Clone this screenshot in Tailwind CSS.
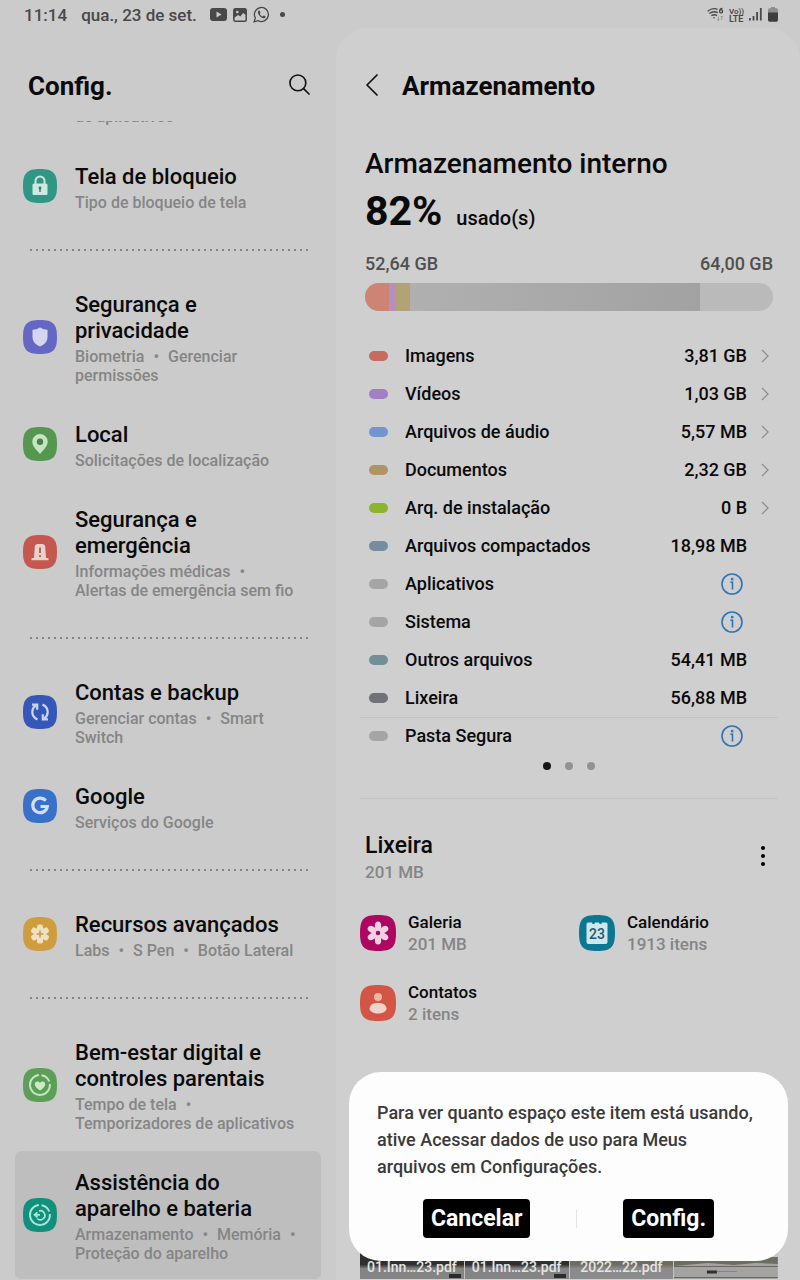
<!DOCTYPE html>
<html lang="pt-BR">
<head>
  <meta charset="UTF-8" />
  <meta name="viewport" content="width=device-width, initial-scale=1.0" />
  <title>Armazenamento</title>
  <script src="https://cdn.jsdelivr.net/npm/@tailwindcss/browser@4"></script>
</head>
<body class="bg-[#cbcbcb] font-['Roboto',sans-serif] text-[#0a0a0a]">
<div class="h-screen flex flex-col overflow-hidden">

  <!-- Status bar -->
  <header class="h-7 shrink-0 flex items-center justify-between pl-6 pr-[22px] pt-px text-[#484848]">
    <div class="flex items-center text-[17px] leading-6 font-medium">
      <span>11:14</span>
      <span class="ml-[14px]">qua., 23 de set.</span>
      <svg class="ml-[13px] w-[17px] h-[13px]" viewBox="0 0 17 13"><rect width="17" height="13" rx="3" fill="#484848"/><path d="M6.5 3.6v5.8L11.5 6.500z" fill="#cbcbcb"/></svg>
      <svg class="ml-[6px] w-[14px] h-[14px]" viewBox="0 0 14 14"><rect x=".8" y=".8" width="12.400" height="12.400" rx="1.500" fill="none" stroke="#484848" stroke-width="1.500"/><path d="M1 1h12v6L10 5 7.500 8.500 5 7 1 10z" fill="#484848"/><circle cx="4.300" cy="4" r="1.300" fill="#cbcbcb"/></svg>
      <svg class="ml-[6px] w-[17px] h-[17px]" viewBox="0 0 17 17" fill="none" stroke="#484848" stroke-width="1.300"><path d="M1.200 15.800l1.100-3.900a7 7 0 1 1 2.700 2.700z"/><path d="M5.600 4.600c-1.500 1.600-.4 4 1.300 5.700s4.200 2.900 5.500 1.300c.5-.8.200-1.200-1.400-2-.8-.3-1 .8-1.600.8S7 8.800 6.900 8s.7-.7.6-1.300C6.800 4.800 6.500 4 5.600 4.600z" fill="#484848" stroke="none"/></svg>
      <span class="ml-[10px] size-[5px] rounded-full bg-[#484848]"></span>
    </div>
    <div class="flex items-center">
      <svg class="w-[17px] h-[15px]" viewBox="0 0 17 15" fill="none" stroke="#484848" stroke-width="1.300"><path d="M.6 4.200Q5.500.4 10.500 2.300M2.300 6.600Q6.500 3.400 11 5.800M4.300 8.800Q7.200 6.800 10 8.600"/><circle cx="7" cy="10.800" r=".8" fill="#484848" stroke="none"/><path d="M15.500 1.500q-3 .2-2.900 3a1.500 1.500 0 1 0 1.400-1.600"/><path d="M11.300 9.500v4m-1-1.200 1 1.200 1-1.200M14.800 13V9m-1 1.200 1-1.200 1 1.200" stroke="#8a8a8a" stroke-width=".8"/></svg>
      <svg class="ml-[5px] w-4 h-4" viewBox="0 0 16 16"><text x="0" y="7" font-size="8" font-weight="600" fill="#484848">Vo))</text><text x="0" y="15" font-size="9" font-weight="600" fill="#484848">LTE</text></svg>
      <svg class="ml-[4px] w-[13px] h-[13px]" viewBox="0 0 13 13" fill="#484848"><path d="M0 10h1.800v2.500H0zM3.600 8h1.800v4.500H3.600zM7.200 4H9v8.500H7.200zM10.900 0h1.800v12.500h-1.800z"/></svg>
      <svg class="ml-[6px] w-[10px] h-[15px]" viewBox="0 0 10 15"><path d="M3 0h4v1.300h1.500Q10 1.300 10 3v3H0V3q0-1.700 1.500-1.700H3z" fill="#8d8d8d"/><path d="M0 5.500h10V13q0 1.700-1.700 1.700H1.700Q0 14.700 0 13z" fill="#3d3d3d"/></svg>
    </div>
  </header>

  <div class="flex-1 min-h-0 grid grid-cols-[42fr_58fr]">

    <!-- Settings menu -->
    <aside class="min-h-0 flex flex-col">
      <div class="shrink-0 h-[93px] pt-[38px] pl-7 pr-6 flex items-start justify-between">
        <h1 class="text-[26px] leading-10 font-bold">Config.</h1>
        <button aria-label="Pesquisar" class="h-9 w-[26px] flex items-center justify-center">
          <svg class="w-[21px] h-[21px]" viewBox="0 0 22 22" fill="none" stroke="#111" stroke-width="1.700" stroke-linecap="round"><circle cx="9.300" cy="9.300" r="8.300"/><path d="M15.300 15.300l5.700 5.700"/></svg>
        </button>
      </div>
      <nav class="flex-1 min-h-0 overflow-hidden">
        <div class="h-6 overflow-hidden pl-[75px]">
          <p class="-mt-[14px] text-[16px] leading-[19px] font-medium text-[#858585]">de aplicativos</p>
        </div>
        <div id="menu" class="flex flex-col gap-[2px]"></div>
      </nav>
    </aside>

    <!-- Storage panel -->
    <main class="relative min-h-0 overflow-hidden rounded-t-[32px] bg-[#cfcfcf] pl-6 pr-[22px]">
      <div class="pt-[38px] flex items-center">
        <button aria-label="Voltar" class="w-6 h-10 pb-[2px] flex items-center justify-center">
          <svg class="w-3 h-[22px]" viewBox="0 0 12 22" fill="none" stroke="#111" stroke-width="1.700" stroke-linecap="round" stroke-linejoin="round"><path d="M11 1L1 11l10 10"/></svg>
        </button>
        <h2 class="ml-[18px] text-[26px] leading-10 font-bold">Armazenamento</h2>
      </div>

      <section class="mt-[41px] px-[5px]">
        <h3 class="text-[28px] leading-[34px] font-medium">Armazenamento interno</h3>
        <p class="mt-[6px] flex items-baseline gap-[14px]">
          <span class="text-[41px] leading-[48px] font-bold">82%</span>
          <span class="text-[20px] leading-6 font-medium">usado(s)</span>
        </p>
        <div class="mt-[19px] flex justify-between text-[18px] leading-5 font-medium text-[#505050]">
          <span>52,64 GB</span>
          <span>64,00 GB</span>
        </div>
        <div class="mt-[9px] h-7 flex rounded-full overflow-hidden bg-[#bababa]">
          <div class="bg-[#cd8474]" style="width: 5.900%"></div>
          <div class="bg-[#b58fbd]" style="width: 1.700%"></div>
          <div class="bg-[#b3a276]" style="width: 3.500%"></div>
          <div class="bg-linear-to-r from-[#b0b0b0] to-[#a2a2a2]" style="width: 71.100%"></div>
        </div>
      </section>

      <table class="mt-[26px] w-full text-[18px] leading-5 font-medium">
        <tbody id="categories"></tbody>
      </table>

      <div class="mt-[7px] flex justify-center gap-[14px]">
        <span class="size-2 rounded-full bg-[#161616]"></span>
        <span class="size-2 rounded-full bg-[#929292]"></span>
        <span class="size-2 rounded-full bg-[#929292]"></span>
      </div>

      <section class="mt-7 pt-[33px] border-t border-[#c3c3c3]">
        <div class="px-[5px] flex items-center justify-between">
          <div>
            <h3 class="text-[23px] leading-7 font-medium">Lixeira</h3>
            <p class="mt-[2px] text-[17px] leading-5 font-medium text-[#858585]">201 MB</p>
          </div>
          <button aria-label="Mais opções" class="w-5 h-8 pb-[2px] flex flex-col items-center justify-center gap-1">
            <span class="size-[4px] rounded-full bg-black"></span>
            <span class="size-[4px] rounded-full bg-black"></span>
            <span class="size-[4px] rounded-full bg-black"></span>
          </button>
        </div>
        <div class="mt-[29px] grid grid-cols-2 gap-x-5 gap-y-[26px] text-[17px] leading-[22px] font-medium">
          <a href="#" class="flex items-center gap-3">
            <svg class="w-9 h-9" viewBox="0 0 36 36"><path d="M18 0C4 0 0 4 0 18s4 18 18 18 18-4 18-18S32 0 18 0z" fill="#ad0762"/><g fill="#efd3e4"><ellipse cx="18" cy="11" rx="3.200" ry="4.500"/><ellipse cx="18" cy="11" rx="3.200" ry="4.500" transform="rotate(60 18 18)"/><ellipse cx="18" cy="11" rx="3.200" ry="4.500" transform="rotate(120 18 18)"/><ellipse cx="18" cy="11" rx="3.200" ry="4.500" transform="rotate(180 18 18)"/><ellipse cx="18" cy="11" rx="3.200" ry="4.500" transform="rotate(240 18 18)"/><ellipse cx="18" cy="11" rx="3.200" ry="4.500" transform="rotate(300 18 18)"/><circle cx="18" cy="18" r="4"/></g><circle cx="18" cy="18" r="2.300" fill="#ad0762"/></svg>
            <span class="flex flex-col"><span>Galeria</span><span class="text-[#858585]">201 MB</span></span>
          </a>
          <a href="#" class="flex items-center gap-3">
            <svg class="w-9 h-9" viewBox="0 0 36 36"><path d="M18 0C4 0 0 4 0 18s4 18 18 18 18-4 18-18S32 0 18 0z" fill="#0c7793"/><path d="M9 7.500h4a1.500 1.500 0 0 0 3 0h4a1.500 1.500 0 0 0 3 0h4q1.500 0 1.500 1.500v18q0 2-2 2h-17q-2 0-2-2V9q0-1.500 1.500-1.500z" fill="#cfe6ec"/><text x="18" y="23.500" text-anchor="middle" font-size="14" font-weight="500" fill="#24586a">23</text></svg>
            <span class="flex flex-col"><span>Calendário</span><span class="text-[#858585]">1913 itens</span></span>
          </a>
          <a href="#" class="flex items-center gap-3">
            <svg class="w-9 h-9" viewBox="0 0 36 36"><path d="M18 0C4 0 0 4 0 18s4 18 18 18 18-4 18-18S32 0 18 0z" fill="#d35545"/><circle cx="18" cy="12" r="4" fill="#efb5a8"/><path d="M18 17.800c5.500 0 8.500 3 8.500 5.700S23 28.500 18 28.500s-8.500-2.300-8.500-5 3-5.700 8.500-5.700z" fill="#f0d3cb"/></svg>
            <span class="flex flex-col"><span>Contatos</span><span class="text-[#858585]">2 itens</span></span>
          </a>
        </div>
      </section>

      <div class="mt-[150px] grid grid-cols-4 gap-px bg-[#c4c4c4] text-[14px] leading-5 font-medium text-[#e4e4e4] text-center">
        <a href="#" class="relative h-[104px] flex flex-col justify-end bg-linear-to-b from-[#2f2f2f] from-86% to-[#848484] to-90%">
          <span class="pb-[2px]">01.Inn…23.pdf</span>
          <span class="absolute right-[3px] bottom-[1px] w-3 h-1 bg-[#2a2a2a]"></span>
        </a>
        <a href="#" class="relative h-[104px] flex flex-col justify-end bg-linear-to-b from-[#2f2f2f] from-86% to-[#848484] to-90%">
          <span class="pb-[2px]">01.Inn…23.pdf</span>
          <span class="absolute right-[3px] bottom-[1px] w-3 h-1 bg-[#2a2a2a]"></span>
        </a>
        <a href="#" class="h-[104px] flex flex-col justify-end bg-linear-to-b from-[#6c6c60] from-86% to-[#8b8b8b] to-90%"><span class="pb-[2px]">2022…22.pdf</span></a>
        <a href="#" aria-label="Arquivo" class="h-[104px] flex items-end">
          <svg class="w-full h-[22px]" viewBox="0 0 104 22" preserveAspectRatio="none"><rect width="104" height="22" fill="#a3a3a1"/><path d="M0 0h104v7L82 6 60 8 34 6 0 9z" fill="#6a705e"/><path d="M0 9.500h104M0 20.500h104" stroke="#6b6460" stroke-width="1"/><path d="M33 13.500h10v3H33z" fill="#303030"/><path d="M43 14.500h20" stroke="#85857c"/></svg>
        </a>
      </div>

      <!-- Permission dialog -->
      <div role="dialog" aria-label="Acesso a dados de uso" class="absolute left-[13px] right-3 bottom-[19px] rounded-[32px] bg-[#fdfdfd] px-7 pt-[27px] pb-[23px]">
        <p class="pr-1 text-[18px] leading-[27px] font-medium text-[#3a3a3a]">Para ver quanto espaço este item está usando, ative Acessar dados de uso para Meus arquivos em Configurações.</p>
        <div class="mt-[19px] flex items-center justify-evenly text-[23px] leading-[39px] font-bold text-white">
          <button class="h-[39px] px-2 rounded-[4px] bg-black">Cancelar</button>
          <span class="w-px h-[18px] bg-[#e2e2e2]"></span>
          <button class="h-[39px] px-2 rounded-[4px] bg-black">Config.</button>
        </div>
      </div>
    </main>
  </div>
</div>

<script>
  const menu = [
    {
      title: 'Tela de bloqueio', details: ['Tipo de bloqueio de tela'], color: '#2f9784',
      icon: '<path d="M12.500 16v-4a4.500 4.500 0 0 1 9 0v4" fill="none" stroke="#c9e6de" stroke-width="2"/><rect x="9.500" y="14.500" width="15" height="11.500" rx="1.500" fill="#cfe8e1"/><circle cx="17" cy="19" r="1.400" fill="#2f7d6d"/><path d="M16.300 19h1.400v4h-1.400z" fill="#2f7d6d"/>'
    },
    { divider: true },
    {
      title: 'Segurança e privacidade', details: ['Biometria', 'Gerenciar permissões'], color: '#6468c4',
      icon: '<path d="M17 7.500q3.500 2.200 7.500 2.200v7.300c0 5-3.500 7.800-7.500 9.500-4-1.700-7.500-4.500-7.500-9.500V9.700Q13.500 9.700 17 7.500z" fill="#d3d6ee"/>'
    },
    {
      title: 'Local', details: ['Solicitações de localização'], color: '#559650',
      icon: '<path d="M17 7a7.700 7.700 0 0 1 7.700 7.700c0 4.800-5 8.800-7.700 12.300-2.700-3.500-7.700-7.500-7.700-12.300A7.700 7.700 0 0 1 17 7z" fill="#c4e6bf"/><circle cx="17" cy="14.800" r="3.200" fill="#4e7d50"/>'
    },
    {
      title: 'Segurança e emergência', details: ['Informações médicas', 'Alertas de emergência sem fio'], color: '#c4584e',
      icon: '<path d="M11 23l.8-11.500Q12 9 14.500 9h5q2.500 0 2.700 2.500L23 23h2.500v2.300h-17V23z" fill="#ead0cb"/><path d="M17 12.500v5.500M17 20v2" stroke="#a3605a" stroke-width="1.800"/>'
    },
    { divider: true },
    {
      title: 'Contas e backup', details: ['Gerenciar contas', 'Smart Switch'], color: '#3558b8',
      icon: '<g fill="none" stroke="#c9d6f2" stroke-width="2.200"><path d="M14.500 24.500Q9.300 22 9.300 17q0-4 3.500-6.600M19.500 9.500Q24.700 12 24.700 17q0 4-3.500 6.600"/><path d="M9 9.600h5.200v5.200M25 24.400h-5.200v-5.200"/></g>'
    },
    {
      title: 'Google', details: ['Serviços do Google'], color: '#3a71c8',
      icon: '<path d="M22.700 11.700A7.300 7.300 0 1 0 24.300 17.500H17.500" fill="none" stroke="#d0dff5" stroke-width="3.200"/>'
    },
    { divider: true },
    {
      title: 'Recursos avançados', details: ['Labs', 'S Pen', 'Botão Lateral'], color: '#cf9d3e',
      icon: '<g fill="#efe0c3"><circle cx="17" cy="17" r="6.300"/><rect x="14" y="7.500" width="6" height="19" rx="2"/><rect x="14" y="7.500" width="6" height="19" rx="2" transform="rotate(60 17 17)"/><rect x="14" y="7.500" width="6" height="19" rx="2" transform="rotate(120 17 17)"/></g><path d="M17 13.500v7M13.500 17h7" stroke="#c99a4a" stroke-width="1.600"/>'
    },
    { divider: true },
    {
      title: 'Bem-estar digital e controles parentais', details: ['Tempo de tela', 'Temporizadores de aplicativos'], color: '#5c9f58',
      icon: '<g fill="none" stroke="#c5e8bd" stroke-width="1.900"><path d="M18.500 7.200a10 10 0 0 1 7.800 6.300M26.900 16a10 10 0 1 1-11-9"/></g><path d="M17 22.500c-3-2.300-5.200-4-5.200-6.300 0-3 3.700-3.800 5.200-1.200 1.500-2.600 5.200-1.800 5.200 1.200 0 2.300-2.200 4-5.200 6.300z" fill="#cdecc6"/>'
    },
    {
      title: 'Assistência do aparelho e bateria', details: ['Armazenamento', 'Memória', 'Proteção do aparelho'], color: '#11907b', selected: true,
      icon: '<g fill="none" stroke="#a9e6d9" stroke-width="1.900"><path d="M18.500 7.200a10 10 0 0 1 7.800 6.300M26.900 16a10 10 0 1 1-11-9"/><path d="M16 13a4.500 4.500 0 1 1-1.800 7.500" stroke-width="1.700"/><path d="M11.500 16.800h5.500M14.500 14.300l-3 2.500 3 2.500" stroke-width="1.700"/></g>'
    }
  ];

  const categories = [
    { name: 'Imagens', size: '3,81 GB', color: '#c76a5f', link: true },
    { name: 'Vídeos', size: '1,03 GB', color: '#a17fc2', link: true },
    { name: 'Arquivos de áudio', size: '5,57 MB', color: '#7295d2', link: true },
    { name: 'Documentos', size: '2,32 GB', color: '#b09468', link: true },
    { name: 'Arq. de instalação', size: '0 B', color: '#8cb52e', link: true },
    { name: 'Arquivos compactados', size: '18,98 MB', color: '#768d9f' },
    { name: 'Aplicativos', color: '#a5a5a5' },
    { name: 'Sistema', color: '#a5a5a5' },
    { name: 'Outros arquivos', size: '54,41 MB', color: '#748e96' },
    { name: 'Lixeira', size: '56,88 MB', color: '#707279' },
    { name: 'Pasta Segura', color: '#a5a5a5', separated: true }
  ];

  const bullet = ' <span class="mx-[5px]">•</span> ';

  const chevron = `
    <svg class="block ml-auto w-2 h-[14px]" viewBox="0 0 8 14" fill="none" stroke="#8c8c8c" stroke-width="1.200">
      <path d="M1 1l6 6-6 6"/>
    </svg>`;

  const infoIcon = `
    <svg class="w-[22px] h-[22px]" viewBox="0 0 22 22" fill="none" stroke="#2f74b5" stroke-width="1.600">
      <circle cx="11" cy="11" r="10"/>
      <path d="M9.300 9.300h2.200v7.200"/>
      <circle cx="11.200" cy="6.200" r=".6"/>
    </svg>`;

  document.getElementById('menu').innerHTML = menu.map(item => {
    if (item.divider) {
      return '<div role="separator" class="mt-[19px] mb-5 ml-7 mr-6 h-[2px] bg-[radial-gradient(circle,#858585_1px,transparent_1px)] bg-[length:6px_2px]"></div>';
    }
    return `
      <a href="#" class="mx-[15px] pl-2 pr-5 pt-[19px] pb-4 flex items-center gap-[18px] rounded-md ${item.selected ? 'bg-[#bebebe]' : ''}">
        <svg class="w-[34px] h-[34px] mb-1 shrink-0" viewBox="0 0 34 34">
          <path d="M17 0C4 0 0 4 0 17s4 17 17 17 17-4 17-17S30 0 17 0z" fill="${item.color}"/>
          ${item.icon}
        </svg>
        <span class="flex flex-col gap-[3px]">
          <span class="text-[22px] leading-[26px] font-medium">${item.title}</span>
          <span class="text-[16px] leading-[19px] font-medium text-[#858585]">${item.details.join(bullet)}</span>
        </span>
      </a>`;
  }).join('');

  document.getElementById('categories').innerHTML = categories.map(c => `
    <tr class="h-[38px] ${c.separated ? 'border-t border-[#c3c3c3]' : ''}">
      <td class="w-[45px] pl-[9px]"><div class="w-[19px] h-[10px] rounded-full" style="background: ${c.color}"></div></td>
      <th scope="row" class="text-left font-medium">${c.name}</th>
      <td class="text-right">${c.size || `<button aria-label="Informações" class="mr-1 flex ml-auto">${infoIcon}</button>`}</td>
      <td class="w-[31px] pr-[9px]">${c.link ? chevron : ''}</td>
    </tr>`).join('');
</script>
</body>
</html>
